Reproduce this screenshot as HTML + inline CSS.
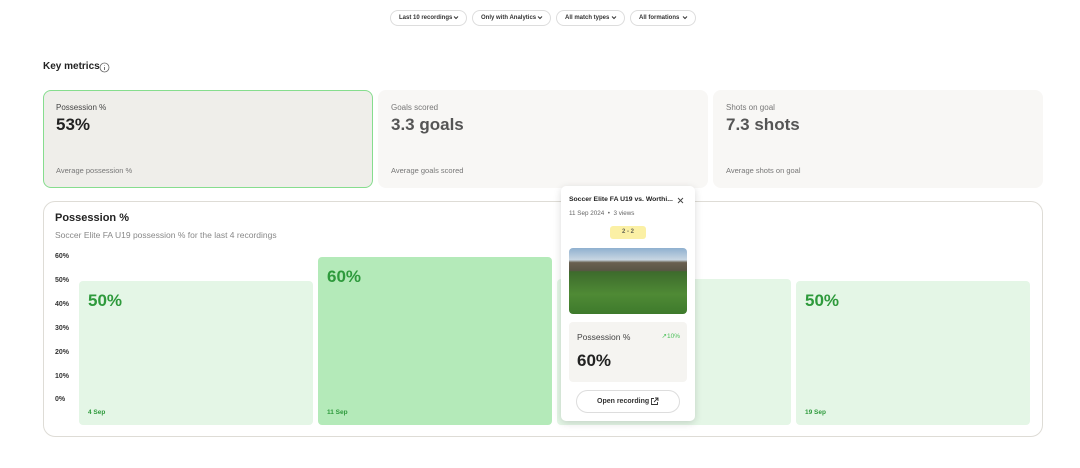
<!DOCTYPE html>
<html><head><meta charset="utf-8"><style>
*{box-sizing:border-box;margin:0;padding:0}
body{width:1080px;height:468px;background:#fff;font-family:"Liberation Sans",sans-serif;position:relative;overflow:hidden;color:#222}
.a{position:absolute}
.pill{position:absolute;top:10px;height:16px;border:1px solid #ddd;border-radius:9px;font-size:6px;font-weight:bold;color:#333;line-height:14px;padding-left:8px;white-space:nowrap}
.pill svg{position:absolute;right:7px;top:4px}
.card{position:absolute;top:90px;width:330px;height:98px;border-radius:8px;background:#f8f7f5}
.card .l{position:absolute;left:13px;top:13px;font-size:8px;color:#777}
.card .v{position:absolute;left:13px;top:25px;font-size:17px;font-weight:bold;color:#555}
.card .s{position:absolute;left:13px;top:76px;font-size:7.5px;color:#777}
.bar{position:absolute;border-radius:4px;background:#e4f6e6}
.bar .p{position:absolute;left:9px;top:10px;font-size:17px;font-weight:bold;color:#2e9a3c}
.bar .d{position:absolute;left:9px;bottom:9px;font-size:6.5px;font-weight:bold;color:#2e9a3c}
.y{position:absolute;left:55px;font-size:7px;font-weight:bold;color:#333}
</style></head><body>
<div class="pill" style="left:390px;width:77px">Last 10 recordings<svg width="6" height="5" viewBox="0 0 6 5"><path d="M1 1.5L3 3.5L5 1.5" stroke="#333" fill="none"/></svg></div>
<div class="pill" style="left:472px;width:79px">Only with Analytics<svg width="6" height="5" viewBox="0 0 6 5"><path d="M1 1.5L3 3.5L5 1.5" stroke="#333" fill="none"/></svg></div>
<div class="pill" style="left:556px;width:69px">All match types<svg width="6" height="5" viewBox="0 0 6 5"><path d="M1 1.5L3 3.5L5 1.5" stroke="#333" fill="none"/></svg></div>
<div class="pill" style="left:630px;width:66px">All formations<svg width="6" height="5" viewBox="0 0 6 5"><path d="M1 1.5L3 3.5L5 1.5" stroke="#333" fill="none"/></svg></div>

<div class="a" style="left:43px;top:61px;font-size:10px;font-weight:bold;color:#222">Key metrics</div>
<svg class="a" style="left:99px;top:62px" width="11" height="11" viewBox="0 0 11 11"><circle cx="5.5" cy="5.5" r="4.5" stroke="#666" fill="none" stroke-width="0.8"/><path d="M5.5 5v3M5.5 3.3v.4" stroke="#666" stroke-width="0.9"/></svg>

<div class="card" style="left:43px;background:#efeeea;border:1.5px solid #86dd8e"><div class="l" style="left:12px;top:12px;color:#444">Possession %</div><div class="v" style="left:12px;top:24px;color:#222">53%</div><div class="s" style="left:12px;top:75px">Average possession %</div></div>
<div class="card" style="left:378px"><div class="l">Goals scored</div><div class="v">3.3 goals</div><div class="s">Average goals scored</div></div>
<div class="card" style="left:713px"><div class="l">Shots on goal</div><div class="v">7.3 shots</div><div class="s">Average shots on goal</div></div>

<div class="a" style="left:43px;top:201px;width:1000px;height:236px;border:1px solid #dedcd6;border-radius:12px"></div>
<div class="a" style="left:55px;top:212px;font-size:11px;font-weight:bold;color:#222">Possession %</div>
<div class="a" style="left:55px;top:230px;font-size:8.5px;color:#888">Soccer Elite FA U19 possession % for the last 4 recordings</div>
<div class="y" style="top:253px">60%</div><div class="y" style="top:277px">50%</div><div class="y" style="top:301px">40%</div><div class="y" style="top:325px">30%</div><div class="y" style="top:349px">20%</div><div class="y" style="top:373px">10%</div><div class="y" style="top:396px">0%</div>

<div class="bar" style="left:79px;top:281px;width:234px;height:144px"><div class="p">50%</div><div class="d">4 Sep</div></div>
<div class="bar" style="left:318px;top:257px;width:234px;height:168px;background:#b4eab9"><div class="p">60%</div><div class="d">11 Sep</div></div>
<div class="bar" style="left:557px;top:279px;width:234px;height:146px"></div>
<div class="bar" style="left:796px;top:281px;width:234px;height:144px"><div class="p">50%</div><div class="d">19 Sep</div></div>

<div class="a" style="left:561px;top:186px;width:134px;height:235px;background:#fff;border-radius:5px;box-shadow:0 2px 8px rgba(0,0,0,.15)">
 <div class="a" style="left:8px;top:10px;font-size:6.8px;font-weight:bold;color:#222;white-space:nowrap">Soccer Elite FA U19 vs. Worthi...</div>
 <svg class="a" style="left:116px;top:11px" width="7" height="7" viewBox="0 0 7 7"><path d="M1 1L6 6M6 1L1 6" stroke="#444" stroke-width="0.9"/></svg>
 <div class="a" style="left:8px;top:24px;font-size:6.3px;color:#666">11 Sep 2024 &nbsp;•&nbsp; 3 views</div>
 <div class="a" style="left:49px;top:40px;width:36px;height:13px;background:#fbf0a5;border-radius:3px;font-size:6px;font-weight:bold;color:#665;text-align:center;line-height:13px">2 - 2</div>
 <div class="a" style="left:8px;top:62px;width:118px;height:66px;border-radius:4px;overflow:hidden;background:linear-gradient(#8fb0cf 0%,#c8d6e2 18%,#6a6050 22%,#5a5546 34%,#3d6b2c 36%,#4f8a35 70%,#3e7a2c 100%)"></div>
 <div class="a" style="left:8px;top:136px;width:118px;height:60px;background:#f5f4f1;border-radius:4px">
  <div class="a" style="left:8px;top:10px;font-size:8.5px;color:#444">Possession %</div>
  <div class="a" style="right:7px;top:10px;font-size:6.5px;color:#4cc05a">↗10%</div>
  <div class="a" style="left:8px;top:29px;font-size:17px;font-weight:bold;color:#222">60%</div>
 </div>
 <div class="a" style="left:15px;top:204px;width:104px;height:23px;border:1px solid #ddd;border-radius:12px;font-size:7px;font-weight:bold;color:#333;line-height:21px;padding-left:20px;white-space:nowrap">Open recording</div>
 <svg class="a" style="left:89px;top:211px" width="9" height="9" viewBox="0 0 9 9"><path d="M4 1.5H1.5v6h6V5M5 1h3v3M8 1L4 5" stroke="#333" fill="none" stroke-width="0.9"/></svg>
</div>
</body></html>
